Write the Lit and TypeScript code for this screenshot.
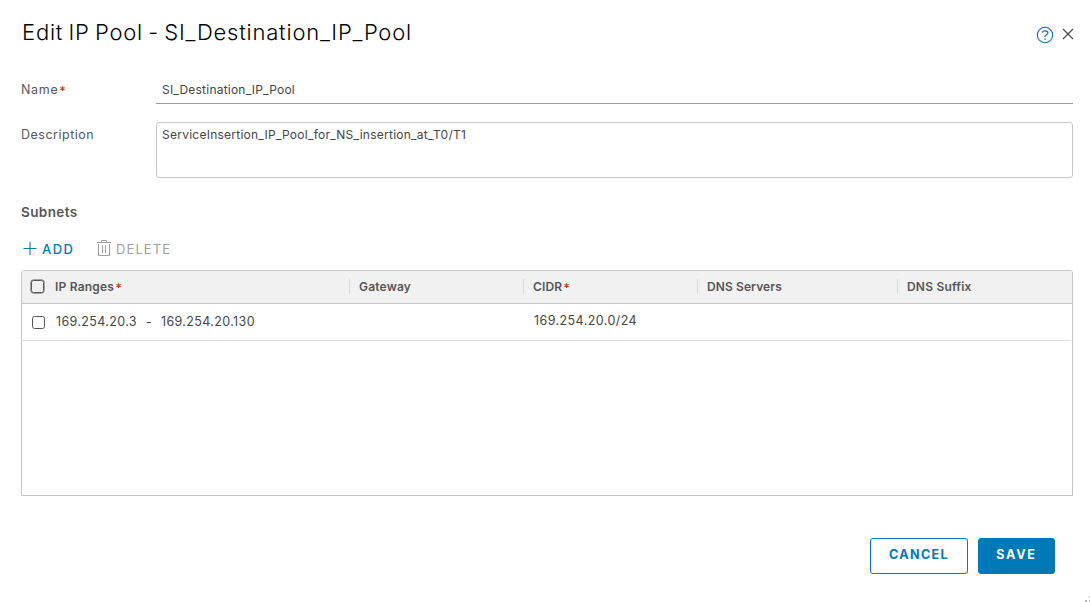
import { LitElement, html, css, svg, nothing } from "lit";
import { customElement, property } from "lit/decorators.js";

interface Column {
  label: string;
  cls: string;
  required?: boolean;
}

const COLUMNS: Column[] = [
  { label: "IP Ranges", cls: "h-ranges", required: true },
  { label: "Gateway", cls: "h-gateway" },
  { label: "CIDR", cls: "h-cidr", required: true },
  { label: "DNS Servers", cls: "h-servers" },
  { label: "DNS Suffix", cls: "h-suffix" },
];

const star = svg`<path d="M2.5 0.2V5M0.4 1.4L4.6 3.8M4.6 1.4L0.4 3.8" stroke="#d93a1c" stroke-width="1.1" fill="none"/>`;

@customElement("subnet-grid")
export class SubnetGrid extends LitElement {
  @property({ attribute: false }) rows: { from: string; to: string; cidr: string }[] = [];

  static styles = css`
    :host {
      display: block;
      box-sizing: border-box;
      height: 226px;
      border: 1px solid #c6c6c6;
      border-radius: 3px 3px 0 0;
      overflow: hidden;
      color: #454545;
    }
    .row {
      display: grid;
      grid-template-columns: 33px 294px 174px 174px 200px 1fr;
      box-sizing: border-box;
    }
    .head {
      height: 33px;
      background: #f1f1f1;
      border-bottom: 1px solid #c6c6c6;
      font-size: 12px;
      font-weight: 600;
      color: #565656;
    }
    .th {
      display: flex;
      align-items: center;
      height: 31px;
      gap: 2px;
      box-sizing: border-box;
      white-space: nowrap;
    }
    .th:not(.h-ranges) {
      background: linear-gradient(#d9d9d9, #d9d9d9) 0 8px / 1px 15px no-repeat;
      padding-left: 10px;
    }
    .h-ranges { letter-spacing: 0.2px; }
    .h-gateway { letter-spacing: 0.2px; }
    .h-cidr { letter-spacing: 0.15px; }
    .h-servers { letter-spacing: 0.1px; }
    .h-suffix { letter-spacing: 0.2px; }
    .star { width: 5px; height: 5px; margin-bottom: 2px; }
    .check {
      box-sizing: border-box;
      width: 13px;
      height: 13px;
      border: 1px solid #565656;
      box-shadow: 0 0 0 0.5px #565656;
      border-radius: 2.5px;
      margin: 9px 0 0 9px;
    }
    .data {
      height: 37px;
      border-bottom: 1px solid #dcdcdc;
      margin-right: 1px;
      font-size: 12.5px;
      letter-spacing: 0.37px;
    }
    .data .check {
      box-shadow: none;
      margin: 12px 0 0 10px;
    }
    .range { display: flex; padding: 10px 0 0 1px; line-height: 16px; }
    .dash { width: 24px; text-align: center; }
    .cidr { padding: 9px 0 0 11px; line-height: 16px; letter-spacing: 0.42px; }
  `;

  render() {
    return html`
      <div class="row head">
        <span class="check"></span>
        ${COLUMNS.map(
          (c) => html`<div class="th ${c.cls}">
            <span>${c.label}</span>${c.required
              ? html`<svg class="star" viewBox="0 0 5 5">${star}</svg>`
              : nothing}
          </div>`
        )}
      </div>
      ${this.rows.map(
        (r) => html`<div class="row data">
          <span class="check"></span>
          <div class="range"><span>${r.from}</span><span class="dash">-</span><span>${r.to}</span></div>
          <div></div>
          <div class="cidr">${r.cidr}</div>
          <div></div>
          <div></div>
        </div>`
      )}
    `;
  }
}

@customElement("app-root")
export class AppRoot extends LitElement {
  static styles = css`
    :host {
      display: block;
      box-sizing: border-box;
      position: relative;
      width: 1090px;
      height: 602px;
      padding: 18px 16px 0 21px;
      background: #fff;
      overflow: hidden;
      font-family: Inter, "Open Sans", sans-serif;
      color: #565656;
    }
    .header {
      display: flex;
      justify-content: space-between;
      height: 62px;
    }
    h1 {
      margin: 0;
      font-size: 22px;
      font-weight: 300;
      line-height: 29px;
      letter-spacing: 0.79px;
      word-spacing: -1.7px;
      color: #000;
      padding-left: 1px;
    }
    .icons { display: flex; align-items: flex-start; }
    .help { width: 18px; height: 18px; margin: 8px 8px 0 0; }
    .close { width: 12px; height: 12px; margin-top: 10px; }
    .field { display: flex; font-size: 12.5px; padding-right: 1px; }
    .label { width: 135px; display: flex; gap: 2px; letter-spacing: 0.5px; }
    .name .label { letter-spacing: 0.7px; }
    .label span { line-height: 20px; }
    .star { width: 5px; height: 5px; margin-top: 6px; }
    .name { height: 42px; }
    .input {
      flex: 1;
      box-sizing: border-box;
      height: 24px;
      padding-left: 6px;
      font-size: 12px;
      line-height: 20px;
      letter-spacing: 0.22px;
      border-bottom: 1px solid #9a9a9a;
      color: #454545;
    }
    .area {
      flex: 1;
      box-sizing: border-box;
      height: 56px;
      border: 1px solid #c6c6c6;
      border-radius: 3px;
      padding: 2px 5px;
      font-size: 12px;
      line-height: 20px;
      letter-spacing: 0.25px;
      color: #454545;
    }
    .desc .label span { line-height: 25px; }
    h2 {
      margin: 24px 0 0;
      font-size: 13.5px;
      line-height: 20px;
      font-weight: 600;
      letter-spacing: 0.4px;
    }
    .actions {
      display: flex;
      height: 48px;
      padding: 16px 0 0 2px;
      box-sizing: border-box;
      font-size: 13px;
      letter-spacing: 1.5px;
      line-height: 22px;
    }
    .action { display: flex; }
    .add { color: #0079b8; width: 74px; font-weight: 500; }
    .delete { color: #a0a0a0; font-weight: 400; letter-spacing: 1.1px; }
    .plus { width: 14px; height: 14px; margin: 3px 5px 0 0; }
    .trash { width: 14px; height: 17px; margin: 1px 5px 0 0; }
    subnet-grid { margin-right: 1px; }
    .footer {
      display: flex;
      justify-content: flex-end;
      gap: 10px;
      padding: 42px 19px 0 0;
    }
    .btn {
      box-sizing: border-box;
      height: 36px;
      border: 1px solid #0079b8;
      border-radius: 3px;
      text-align: center;
      font-size: 12.5px;
      font-weight: 700;
      letter-spacing: 1.4px;
      line-height: 32px;
      color: #0079b8;
    }
    .cancel { width: 98px; }
    .save { width: 77px; background: #0079b8; color: #fff; letter-spacing: 1.8px; }
    .grip { position: absolute; right: 0; bottom: 0; width: 5px; height: 6px; }
  `;

  render() {
    return html`
      <div class="header">
        <h1>Edit IP Pool - SI_Destination_IP_Pool</h1>
        <div class="icons">
          <svg class="help" viewBox="0 0 18 18" fill="none" stroke="#0079b8">
            <circle cx="9" cy="9" r="7.7" stroke-width="1.1" />
            <path d="M6.2 6.7C6.5 5.4 7.6 4.8 9 4.8C10.7 4.8 11.9 5.6 11.9 7C11.9 8.9 9 8.7 9 10.6V11" stroke-width="1.2" />
            <path d="M8.3 13.1H9.8" stroke-width="1.2" />
          </svg>
          <svg class="close" viewBox="0 0 12 12" fill="none" stroke="#454545" stroke-width="1.1">
            <path d="M1 1L11 11M11 1L1 11" />
          </svg>
        </div>
      </div>
      <div class="field name">
        <div class="label"><span>Name</span><svg class="star" viewBox="0 0 5 5">${star}</svg></div>
        <div class="input">SI_Destination_IP_Pool</div>
      </div>
      <div class="field desc">
        <div class="label"><span>Description</span></div>
        <div class="area">ServiceInsertion_IP_Pool_for_NS_insertion_at_T0/T1</div>
      </div>
      <h2>Subnets</h2>
      <div class="actions">
        <div class="action add">
          <svg class="plus" viewBox="0 0 14 14" stroke="#0079b8" stroke-width="1.1">
            <path d="M0.5 7.5H13.5M7 1V14" />
          </svg><span>ADD</span>
        </div>
        <div class="action delete">
          <svg class="trash" viewBox="0 0 14 17" fill="none" stroke="#a0a0a0">
            <path d="M0 3.5H14M1.5 5V16.5H12.5V5M4.5 3V1.5H9.5V3M5.5 6.5V14M8.5 6.5V14" />
          </svg><span>DELETE</span>
        </div>
      </div>
      <subnet-grid
        .rows=${[{ from: "169.254.20.3", to: "169.254.20.130", cidr: "169.254.20.0/24" }]}
      ></subnet-grid>
      <div class="footer">
        <div class="btn cancel">CANCEL</div>
        <div class="btn save">SAVE</div>
      </div>
      <svg class="grip" viewBox="0 0 5 6" fill="#b5b5b5">
        <rect x="4" y="0" width="1" height="2" />
        <rect x="0" y="4" width="2" height="2" />
        <rect x="4" y="4" width="1" height="2" />
      </svg>
    `;
  }
}
